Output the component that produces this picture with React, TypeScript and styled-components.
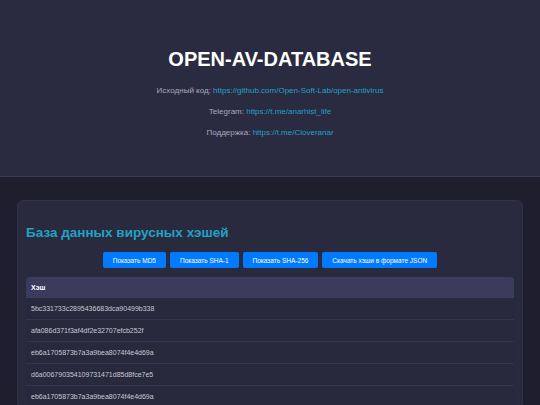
import styled, { createGlobalStyle } from 'styled-components';

const GlobalStyle = createGlobalStyle`
  html, body {
    margin: 0;
    padding: 0;
    background-color: #1e1e2e;
    font-family: "Liberation Sans", Arial, sans-serif;
  }
`;

const links = [
  { label: 'Исходный код:', href: 'https://github.com/Open-Soft-Lab/open-antivirus' },
  { label: 'Telegram:', href: 'https://t.me/anarhist_life' },
  { label: 'Поддержка:', href: 'https://t.me/Cloveranar' },
];

const hashes = [
  '5bc331733c2895436683dca90499b338',
  'afa086d371f3af4df2e32707efcb252f',
  'eb6a1705873b7a3a9bea8074f4e4d69a',
  'd6a006790354109731471d85d8fce7e5',
  'eb6a1705873b7a3a9bea8074f4e4d69a',
];

const buttons = ['Показать MD5', 'Показать SHA-1', 'Показать SHA-256', 'Скачать хэши в формате JSON'];

function App() {
  return (
    <>
      <GlobalStyle />
      <Header>
        <Title>OPEN-AV-DATABASE</Title>
        {links.map((l) => (
          <InfoLine key={l.href}>
            {l.label} <Link href={l.href}>{l.href}</Link>
          </InfoLine>
        ))}
      </Header>

      <Main>
        <Card>
          <CardTitle>База данных вирусных хэшей</CardTitle>

          <ButtonRow>
            {buttons.map((b) => (
              <Button key={b}>{b}</Button>
            ))}
          </ButtonRow>

          <Table>
            <thead>
              <tr>
                <Th>Хэш</Th>
              </tr>
            </thead>
            <tbody>
              {hashes.map((h, i) => (
                <tr key={i}>
                  <Td>{h}</Td>
                </tr>
              ))}
            </tbody>
          </Table>
        </Card>
      </Main>
    </>
  );
}

export default App;

const Header = styled.header`
  background-color: #2a2b40;
  border-bottom: 1px solid #3a3a58;
  padding: 47px 20px 27px;
  text-align: center;
`;

const Title = styled.h1`
  margin: 0 0 15px;
  font-size: 20px;
  line-height: 24px;
  font-weight: bold;
  color: #ffffff;
`;

const InfoLine = styled.p`
  margin: 0 0 12px;
  font-size: 8px;
  line-height: 9px;
  color: #a9a9b8;
`;

const Link = styled.a`
  color: #1fa2c4;
  text-decoration: none;
`;

const Main = styled.main`
  padding: 23px 17px 0;
`;

const Card = styled.section`
  background-color: #2a2a3f;
  border: 1px solid #303048;
  border-radius: 6px;
  padding: 23px 8px 0;
`;

const CardTitle = styled.h2`
  margin: 0 0 10px;
  font-size: 13.5px;
  line-height: 18px;
  font-weight: bold;
  color: #1fa2c4;
`;

const ButtonRow = styled.div`
  display: flex;
  justify-content: center;
  gap: 4px;
  margin-bottom: 9px;
`;

const Button = styled.button`
  background-color: #007bff;
  color: #ffffff;
  border: none;
  border-radius: 2px;
  padding: 0 10px;
  height: 16px;
  font-family: "Liberation Sans", Arial, sans-serif;
  font-size: 6.5px;
  cursor: pointer;
`;

const Table = styled.table`
  width: 100%;
  border-collapse: separate;
  border-spacing: 0;
`;

const Th = styled.th`
  background-color: #3b3b5e;
  color: #ffffff;
  text-align: left;
  font-size: 7px;
  font-weight: bold;
  line-height: 8px;
  padding: 7px 5px 6px;
  border-radius: 4px 4px 0 0;
`;

const Td = styled.td`
  background-color: #29293d;
  color: #c8c8d4;
  font-size: 7px;
  line-height: 8px;
  padding: 7px 5px 6px;
  border-bottom: 1px solid #34344f;
`;
